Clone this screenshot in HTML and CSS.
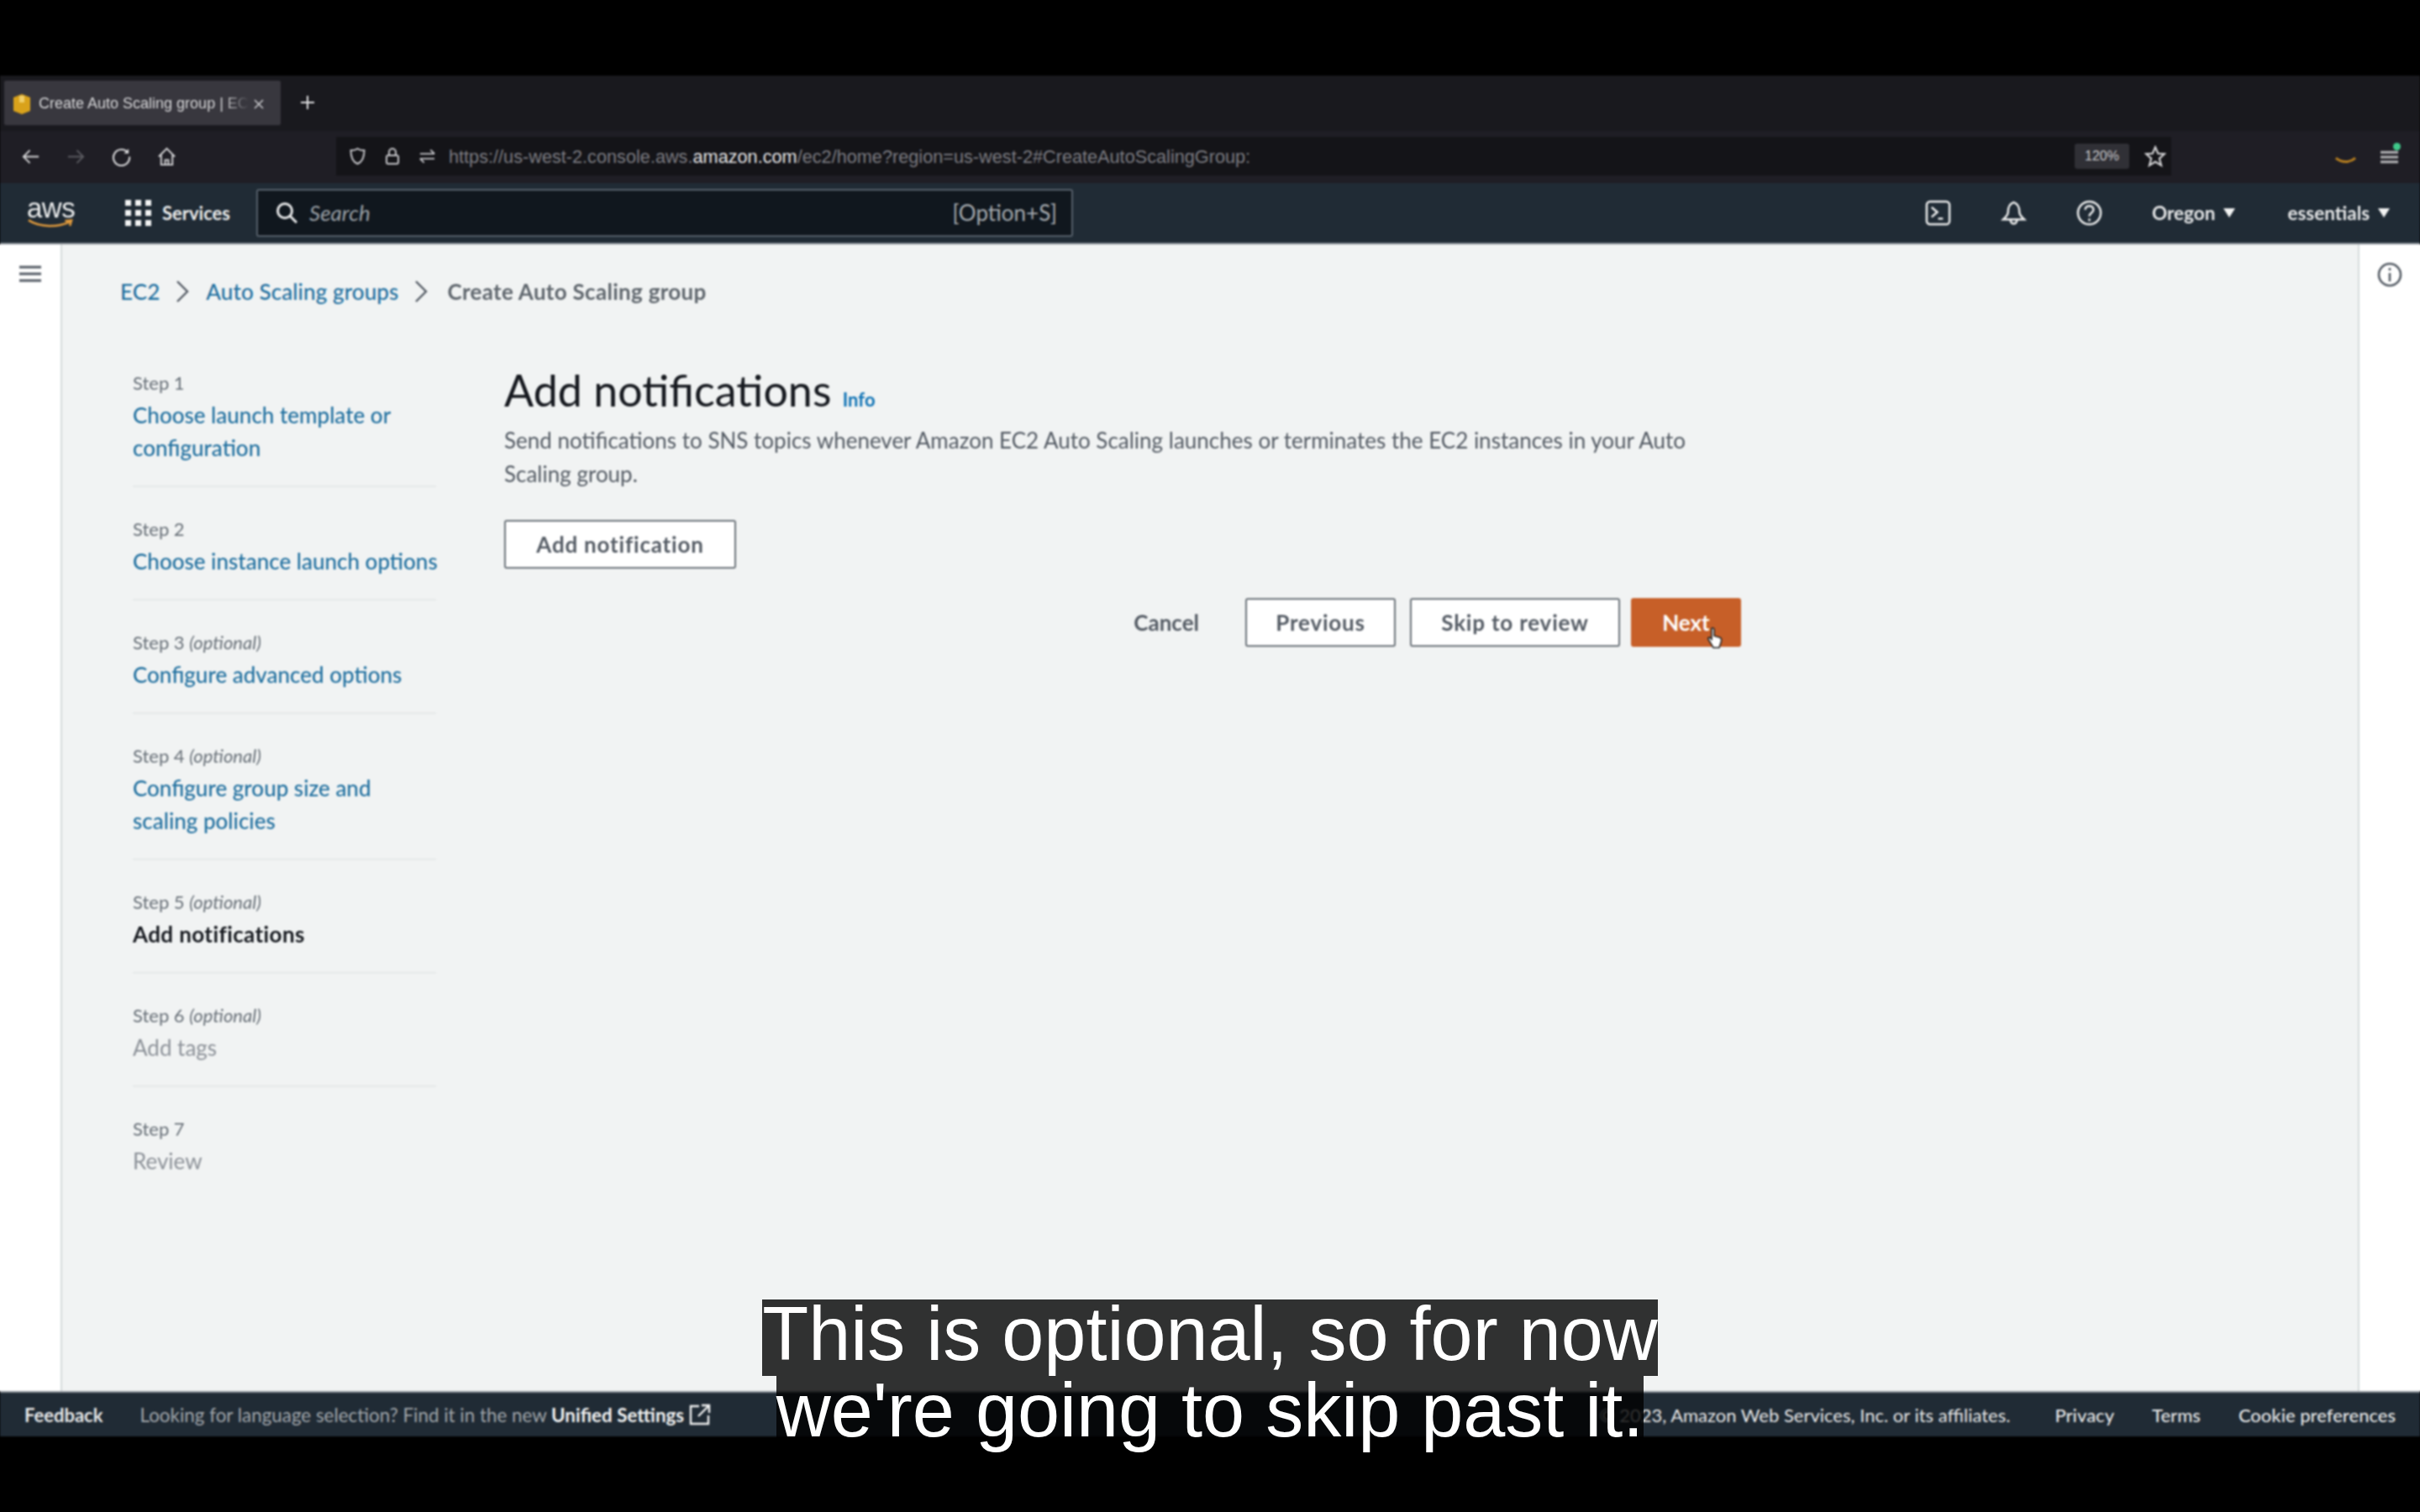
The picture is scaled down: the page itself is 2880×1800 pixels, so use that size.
FILE: index.html
```html
<!DOCTYPE html>
<html lang="en">
<head>
    <meta charset="UTF-8" />
    <title>Create Auto Scaling group | EC2</title>
    <link rel="stylesheet" href="styles.css">
</head>
<body>
<div class="screen">
  <div class="tabstrip">
    <div class="tab">
      <svg class="favicon" viewBox="0 0 22 26"><path d="M1 5 L11 1 L21 5 V21 L11 25 L1 21 Z" fill="#d9a21b"/><path d="M8 3 H14 V11 H8 Z" fill="#f0cf6a"/></svg>
      <span class="tab-title">Create Auto Scaling group | EC2</span>
      <svg class="tab-close" viewBox="0 0 12 12"><path d="M1 1 L11 11 M11 1 L1 11" stroke="#c9c9cc" stroke-width="1.6"/></svg>
    </div>
    <svg class="tab-plus" viewBox="0 0 18 18"><path d="M9 1 V17 M1 9 H17" stroke="#e2e2e4" stroke-width="2"/></svg>
  </div>

  <div class="toolbar">
    <div class="nav-icons">
      <svg class="tool-icon" viewBox="0 0 24 24" fill="none" stroke="#d6d6d8" stroke-width="2"><path d="M22 12 H3 M11 4 L3 12 L11 20"/></svg>
      <svg class="tool-icon" viewBox="0 0 24 24" fill="none" stroke="#5a5a60" stroke-width="2"><path d="M2 12 H21 M13 4 L21 12 L13 20"/></svg>
      <svg class="tool-icon" viewBox="0 0 24 24" fill="none" stroke="#d6d6d8" stroke-width="2.2"><path d="M20 7 A10 10 0 1 0 22 12"/><path d="M21 2 V8 H15" fill="#d6d6d8" stroke="none"/></svg>
      <svg class="tool-icon" viewBox="0 0 24 24" fill="none" stroke="#d6d6d8" stroke-width="2"><path d="M2 12 L12 2 L22 12 M5 10 V22 H19 V10 M10 22 V16 H14 V22"/></svg>
    </div>
    <div class="urlbar">
      <svg class="url-icon" viewBox="0 0 20 22" fill="none" stroke="#c4c4c8" stroke-width="2"><path d="M10 2 C13 4 16 4 18 4 C18 13 15 18 10 20 C5 18 2 13 2 4 C4 4 7 4 10 2 Z"/></svg>
      <svg class="url-icon small" viewBox="0 0 18 22" fill="none" stroke="#c4c4c8" stroke-width="2"><path d="M5 10 V6 A4 4 0 0 1 13 6 V10"/><rect x="2" y="10" width="14" height="10" rx="2"/></svg>
      <svg class="url-icon" viewBox="0 0 22 18" fill="none" stroke="#c4c4c8" stroke-width="2"><path d="M2 6 H20 M15 1 L20 6 M20 12 H2 M7 17 L2 12"/></svg>
      <span class="url"><span class="url-dim">https://us-west-2.console.aws.</span><span class="url-host">amazon.com</span><span class="url-dim">/ec2/home?region=us-west-2#CreateAutoScalingGroup:</span></span>
      <span class="zoom-badge">120%</span>
      <svg class="star" viewBox="0 0 24 24" fill="none" stroke="#d6d6d8" stroke-width="2"><path d="M12 2 L15 9 L22 9.5 L16.5 14.5 L18.5 22 L12 18 L5.5 22 L7.5 14.5 L2 9.5 L9 9 Z"/></svg>
    </div>
    <svg class="smile" viewBox="0 0 28 12" fill="none" stroke="#b9801f" stroke-width="3"><path d="M2 3 C9 9 19 9 26 3"/></svg>
    <div class="menu-wrap">
      <svg class="menu-icon" viewBox="0 0 22 20" fill="none" stroke="#b5b5b8" stroke-width="3"><path d="M0 4 H22 M0 10 H22 M0 16 H22"/></svg>
      <span class="menu-dot"></span>
    </div>
  </div>

  <header class="awsbar">
    <div class="aws-logo">
      <span class="aws-word">aws</span>
      <svg class="aws-smile" viewBox="0 0 58 12" fill="none" stroke="#e09a3c" stroke-width="2.6"><path d="M2 2 C16 11 38 11 53 4 M47 3 L55 2 L53 9"/></svg>
    </div>
    <div class="services">
      <svg class="grid-icon" viewBox="0 0 31 31" fill="#f2f3f3"><rect width="7" height="7"/><rect x="12" width="7" height="7"/><rect x="24" width="7" height="7"/><rect y="12" width="7" height="7"/><rect x="12" y="12" width="7" height="7"/><rect x="24" y="12" width="7" height="7"/><rect y="24" width="7" height="7"/><rect x="12" y="24" width="7" height="7"/><rect x="24" y="24" width="7" height="7"/></svg>
      <span>Services</span>
    </div>
    <div class="search">
      <svg class="search-icon" viewBox="0 0 26 26" fill="none" stroke="#e6e7e8" stroke-width="3"><circle cx="11" cy="11" r="8.5"/><path d="M17 17 L25 25"/></svg>
      <span class="search-text">Search</span>
      <span class="search-key">[Option+S]</span>
    </div>
    <div class="bar-right">
      <svg class="bar-icon cell" viewBox="0 0 32 32" fill="none" stroke="#eceded" stroke-width="2.6"><rect x="2" y="2" width="28" height="28" rx="4"/><path d="M8 9 L15 15 L8 21 M16 23 H22"/></svg>
      <svg class="bar-icon cell" viewBox="0 0 32 32" fill="none" stroke="#eceded" stroke-width="2.6"><path d="M16 3 C10 5 9 10 9 15 C9 19 6 21 3 24 H29 C26 21 23 19 23 15 C23 10 22 5 16 3 Z M12 24 C12 31 20 31 20 24"/></svg>
      <svg class="bar-icon cell" viewBox="0 0 32 32" fill="none" stroke="#eceded" stroke-width="2.6"><circle cx="16" cy="16" r="14"/><path d="M11 12 C11 6 21 6 21 12 C21 16 16 16 16 20 M16 23 V26"/></svg>
      <span class="bar-menu oregon">Oregon <i class="caret"></i></span>
      <span class="bar-menu">essentials <i class="caret"></i></span>
    </div>
  </header>

  <div class="workspace">
    <aside class="rail rail-left">
      <svg class="rail-burger" viewBox="0 0 26 22" fill="none" stroke="#545b64" stroke-width="3"><path d="M0 3 H26 M0 11 H26 M0 19 H26"/></svg>
    </aside>

    <main class="content">
      <nav class="crumbs">
        <a class="link">EC2</a>
        <svg class="chev" viewBox="0 0 16 28" fill="none" stroke="#545b64" stroke-width="2.4"><path d="M2 2 L14 14 L2 26"/></svg>
        <a class="link">Auto Scaling groups</a>
        <svg class="chev" viewBox="0 0 16 28" fill="none" stroke="#545b64" stroke-width="2.4"><path d="M2 2 L14 14 L2 26"/></svg>
        <span class="crumb-here">Create Auto Scaling group</span>
      </nav>

      <div class="wizard">
        <ol class="steps">
          <li class="step"><div class="step-label">Step 1</div><a class="link">Choose launch template or<br>configuration</a></li>
          <li class="step"><div class="step-label">Step 2</div><a class="link">Choose instance launch options</a></li>
          <li class="step"><div class="step-label">Step 3 <em>(optional)</em></div><a class="link">Configure advanced options</a></li>
          <li class="step"><div class="step-label">Step 4 <em>(optional)</em></div><a class="link">Configure group size and<br>scaling policies</a></li>
          <li class="step"><div class="step-label">Step 5 <em>(optional)</em></div><b class="step-current">Add notifications</b></li>
          <li class="step"><div class="step-label">Step 6 <em>(optional)</em></div><span class="step-off">Add tags</span></li>
          <li class="step"><div class="step-label">Step 7</div><span class="step-off">Review</span></li>
        </ol>

        <section class="form">
          <h1 class="title">Add notifications <a class="info">Info</a></h1>
          <p class="desc">Send notifications to SNS topics whenever Amazon EC2 Auto Scaling launches or terminates the EC2 instances in your Auto<br>Scaling group.</p>
          <button class="btn btn-add">Add notification</button>
          <div class="actions">
            <button class="btn-plain">Cancel</button>
            <button class="btn btn-prev">Previous</button>
            <button class="btn btn-skip">Skip to review</button>
            <button class="btn btn-next">Next
              <svg class="cursor" viewBox="0 0 20 26"><path d="M6 2 C8 1 9 2 9 4 V11 L16 13 C18 14 18 16 17 19 L15 25 H8 L2 15 C1 13 3 12 5 14 L6 15 Z" fill="#fff" stroke="#222" stroke-width="1.6"/></svg>
            </button>
          </div>
        </section>
      </div>
    </main>

    <aside class="rail rail-right">
      <svg class="rail-info" viewBox="0 0 30 30" fill="none" stroke="#545b64" stroke-width="2.6"><circle cx="15" cy="15" r="13"/><path d="M15 7 V10 M15 13 V23"/></svg>
    </aside>
  </div>

  <footer class="footbar">
    <span class="foot-feedback">Feedback</span>
    <span class="foot-lang">Looking for language selection? Find it in the new <b>Unified Settings</b></span>
    <svg class="foot-ext" viewBox="0 0 26 26" fill="none" stroke="#f2f3f3" stroke-width="2.4"><path d="M12 3 H2 V24 H23 V14 M15 2 H24 V11 M24 2 L11 15"/></svg>
    <span class="foot-copy">© 2023, Amazon Web Services, Inc. or its affiliates.</span>
    <span class="foot-link foot-first">Privacy</span>
    <span class="foot-link">Terms</span>
    <span class="foot-link">Cookie preferences</span>
  </footer>
</div>

<div class="caption">
  <span class="caption-line">This is optional, so for now</span>
  <span class="caption-line">we're going to skip past it.</span>
</div>
</body>
</html>
```

FILE: styles.css
```css
* {
    box-sizing: border-box;
}

html,
body {
    margin: 0;
    height: 1800px;
    background: #000;
    overflow: hidden;
}

body {
    position: relative;
    padding-top: 90px;
    font-family: "Lato", "Noto Sans", sans-serif;
}

.screen {
    height: 1620px;
    display: flex;
    flex-direction: column;
    background: #1a1a1f;
    filter: blur(0.9px);
}

/* browser tabs */
.tabstrip {
    height: 66px;
    padding: 6px 0 0 5px;
    display: flex;
    align-items: flex-start;
    background: #19191e;
}

.tab {
    width: 329px;
    height: 53px;
    padding: 2px 18px 0 10px;
    display: flex;
    align-items: center;
    background: #38373e;
    border-radius: 2px;
}

.favicon {
    width: 22px;
    height: 26px;
    flex: none;
}

.tab-title {
    width: 250px;
    margin-left: 9px;
    overflow: hidden;
    white-space: nowrap;
    font-family: "Liberation Sans", sans-serif;
    font-size: 18px;
    color: #d8d8da;
    -webkit-mask-image: linear-gradient(to right, #000 88%, transparent);
    mask-image: linear-gradient(to right, #000 88%, transparent);
}

.tab-close {
    width: 12px;
    height: 12px;
    margin-left: 6px;
}

.tab-plus {
    width: 18px;
    height: 18px;
    margin: 17px 0 0 23px;
}

/* browser toolbar */
.toolbar {
    height: 62px;
    display: flex;
    align-items: center;
    background: #1f1e25;
}

.nav-icons {
    width: 400px;
    padding-left: 25px;
    display: flex;
    gap: 31px;
}

.tool-icon {
    width: 23px;
    height: 23px;
}

.urlbar {
    width: 2184px;
    height: 46px;
    margin-top: -2px;
    padding: 0 6px 0 15px;
    display: flex;
    align-items: center;
    background: #141418;
}

.url-icon {
    width: 21px;
    height: 22px;
    margin-right: 22px;
}

.url-icon.small {
    width: 18px;
}

.url {
    margin: 2px 0 0 -7px;
    flex: 1;
    white-space: nowrap;
    font-family: "Liberation Sans", sans-serif;
    font-size: 21.7px;
}

.url-dim {
    color: #7c7c82;
}

.url-host {
    color: #e6e6e8;
}

.zoom-badge {
    width: 65px;
    height: 30px;
    line-height: 30px;
    text-align: center;
    font-family: "Liberation Sans", sans-serif;
    font-size: 16px;
    color: #c8c8cb;
    background: #303036;
    border-radius: 3px;
}

.star {
    width: 26px;
    height: 26px;
    margin-left: 18px;
}

.smile {
    width: 27px;
    height: 12px;
    margin: 8px 0 0 194px;
}

.menu-wrap {
    position: relative;
    width: 21px;
    height: 20px;
    margin-left: 28px;
}

.menu-icon {
    display: block;
    width: 21px;
    height: 20px;
}

.menu-dot {
    position: absolute;
    top: -7px;
    right: -3px;
    width: 9px;
    height: 9px;
    background: #3fc98a;
    border-radius: 50%;
}

/* aws console bar */
.awsbar {
    height: 73px;
    padding-left: 32px;
    display: flex;
    align-items: center;
    background: #202b35;
    border-bottom: 2px solid #8c9299;
}

.aws-logo {
    width: 56px;
    height: 40px;
    position: relative;
}

.aws-word {
    display: block;
    font-family: "Liberation Sans", sans-serif;
    font-size: 33px;
    line-height: 30px;
    letter-spacing: -0.5px;
    color: #eceded;
}

.aws-smile {
    position: absolute;
    left: 0;
    top: 27px;
    width: 56px;
    height: 12px;
}

.services {
    margin-left: 61px;
    display: flex;
    align-items: center;
    gap: 13px;
    font-size: 22px;
    font-weight: 700;
    color: #eceded;
}

.grid-icon {
    width: 31px;
    height: 31px;
}

.search {
    width: 972px;
    height: 57px;
    margin-left: 31px;
    padding: 0 17px 0 21px;
    display: flex;
    align-items: center;
    background: #10171e;
    border: 2px solid #56606a;
    border-radius: 3px;
}

.search-icon {
    width: 26px;
    height: 26px;
}

.search-text {
    margin-left: 14px;
    flex: 1;
    font-size: 26px;
    font-style: italic;
    color: #9aa0a6;
}

.search-key {
    font-size: 26px;
    color: #a6abb0;
}

.bar-right {
    margin-left: 1014px;
    display: flex;
    align-items: center;
}

.bar-icon {
    width: 31px;
    height: 31px;
}

.cell {
    margin-right: 59px;
}

.bar-menu {
    display: flex;
    align-items: center;
    gap: 10px;
    white-space: nowrap;
    font-size: 22.5px;
    font-weight: 700;
    color: #e6e7e8;
}

.oregon {
    margin-right: 62px;
}

.caret {
    width: 0;
    height: 0;
    border-left: 7px solid transparent;
    border-right: 7px solid transparent;
    border-top: 11px solid #f2f3f3;
}

/* page */
.workspace {
    height: 1367px;
    display: flex;
    background: #fff;
    box-shadow: -6px 0 0 #fff, 6px 0 0 #fff;
}

.rail {
    flex: none;
    display: flex;
    justify-content: center;
    align-items: flex-start;
}

.rail-left {
    width: 74px;
    border-right: 2px solid #d5dbdb;
}

.rail-right {
    width: 74px;
    border-left: 2px solid #d5dbdb;
}

.rail-burger {
    width: 26px;
    height: 22px;
    margin-top: 24px;
}

.rail-info {
    width: 30px;
    height: 30px;
    margin-top: 21px;
}

.content {
    flex: 1;
    padding-left: 69px;
    background: #f1f3f3;
}

.crumbs {
    height: 145px;
    padding-top: 36px;
    display: flex;
    align-items: flex-start;
    font-size: 26px;
    line-height: 40px;
}

.link {
    color: #1f6f9f;
    font-weight: 500;
}

.crumbs .link {
    letter-spacing: 0.1px;
}

.chev {
    width: 16px;
    height: 28px;
    margin: 6px 20px 0 19px;
}

.crumb-here {
    margin-left: 3px;
    font-weight: 700;
    letter-spacing: 0.3px;
    color: #5f666d;
}

.wizard {
    display: flex;
}

.steps {
    width: 374px;
    margin: 0 0 0 15px;
    padding: 0;
    list-style: none;
    font-size: 26px;
    line-height: 39px;
}

.step {
    width: 361px;
    padding: 30px 0 25px;
    white-space: nowrap;
    border-bottom: 2px solid #e5e8e8;
}

.step:first-child {
    padding-top: 0;
}

.step:last-child {
    border-bottom: none;
}

.step-label {
    font-size: 22px;
    color: #687078;
}

.step-current {
    letter-spacing: 0.4px;
    color: #16191f;
}

.step-off {
    color: #8d9299;
}

.form {
    width: 1472px;
    margin-left: 68px;
    flex: none;
}

.title {
    margin: -2px 0 10px;
    font-size: 52px;
    line-height: 60px;
    font-weight: 400;
    color: #16191f;
}

.info {
    font-size: 22px;
    line-height: 1;
    font-weight: 700;
    color: #0f73b5;
}

.desc {
    margin: 0 0 35px;
    font-size: 26px;
    line-height: 40px;
    color: #545b64;
}

.btn {
    height: 58px;
    display: block;
    font-family: inherit;
    font-size: 26px;
    font-weight: 700;
    letter-spacing: 0.8px;
    color: #545b64;
    background: #fff;
    border: 2px solid #6b7279;
    border-radius: 3px;
}

.btn-add {
    width: 276px;
}

.actions {
    margin-top: 35px;
    display: flex;
    justify-content: flex-end;
    align-items: center;
    gap: 15px;
}

.btn-plain {
    margin-right: 40px;
    font-family: inherit;
    font-size: 26px;
    font-weight: 700;
    color: #545b64;
    background: none;
    border: none;
    padding: 0;
}

.btn-prev {
    width: 179px;
    margin-right: 2px;
}

.btn-skip {
    width: 250px;
}

.btn-next {
    position: relative;
    width: 131px;
    margin-left: -2px;
    letter-spacing: 0;
    color: #fff;
    background: #c75f28;
    border-color: #c75f28;
}

.cursor {
    position: absolute;
    left: 87px;
    top: 32px;
    width: 22px;
    height: 26px;
}

/* console footer */
.footbar {
    height: 54px;
    padding: 0 29px;
    display: flex;
    align-items: center;
    font-size: 22px;
    font-weight: 700;
    color: #e6e7e8;
    background: #202b35;
    border-top: 2px solid #8c9299;
    white-space: nowrap;
}

.foot-lang {
    margin-left: 44px;
    font-size: 22.4px;
    font-weight: 400;
    color: #a0a6ab;
}

.foot-lang b {
    color: #f2f3f3;
}

.foot-ext {
    width: 26px;
    height: 26px;
    margin-left: 6px;
}

.foot-copy {
    margin-left: auto;
    font-weight: 400;
}

.foot-link {
    margin-left: 45px;
    font-weight: 500;
}

.foot-first {
    margin-left: 53px;
}

/* subtitle burned over the recording */
.caption {
    position: absolute;
    left: 0;
    right: 0;
    top: 1547px;
    display: flex;
    flex-direction: column;
    align-items: center;
    font-family: "Liberation Sans", sans-serif;
    font-size: 90px;
    line-height: 83px;
    color: #fff;
}

.caption-line {
    padding-bottom: 8px;
    background: rgba(0, 0, 0, 0.8);
    white-space: nowrap;
}
```
